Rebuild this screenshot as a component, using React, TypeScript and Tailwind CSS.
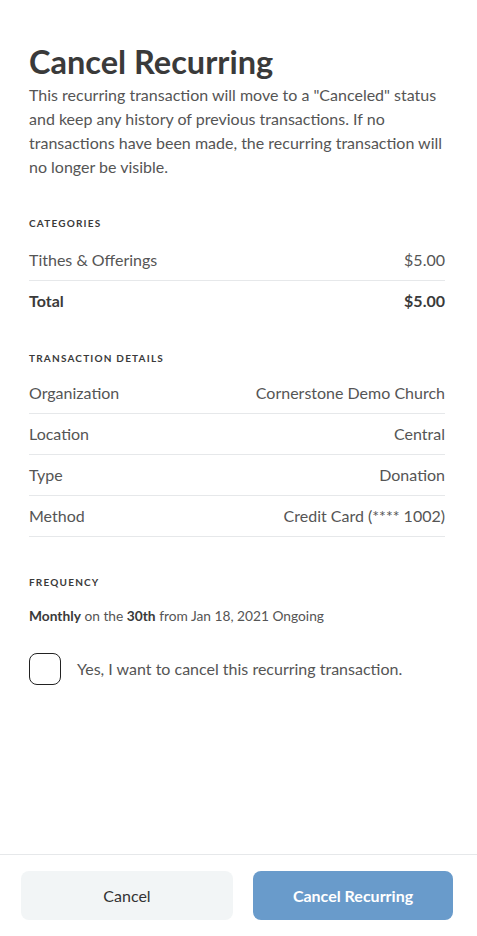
import React from "react";

const font = { fontFamily: '"Lato", "Liberation Sans", sans-serif' };

function Row({ label, value, bold, last }: { label: string; value: string; bold?: boolean; last?: boolean }) {
  return (
    <div
      className={`flex items-center justify-between py-[10px] text-base leading-5 ${
        last ? "" : "border-b border-[#e6e8ea]"
      } ${bold ? "font-bold text-[#3a3a3a]" : "text-[#555]"}`}
    >
      <span>{label}</span>
      <span>{value}</span>
    </div>
  );
}

function SectionLabel({ children }: { children: React.ReactNode }) {
  return (
    <p className="text-[10px] font-bold uppercase leading-4 tracking-[0.12em] text-[#3a3a3a]">
      {children}
    </p>
  );
}

export default function App() {
  return (
    <div className="flex h-[936px] w-full flex-col bg-white" style={font}>
      <div className="flex-1 pl-[29px] pr-[32px] pt-[44px]">
        <h1 className="text-[32.5px] font-bold leading-9 text-[#3a3a3a]">Cancel Recurring</h1>
        <p className="mt-[3px] text-base leading-6 text-[#555]">
          This recurring transaction will move to a "Canceled" status and keep any history of previous
          transactions. If no transactions have been made, the recurring transaction will no longer be
          visible.
        </p>

        {/* Categories */}
        <div className="mt-[36px]">
          <SectionLabel>Categories</SectionLabel>
          <div className="mt-[9px]">
            <Row label="Tithes & Offerings" value="$5.00" />
            <Row label="Total" value="$5.00" bold last />
          </div>
        </div>

        {/* Transaction details */}
        <div className="mt-[29px]">
          <SectionLabel>Transaction Details</SectionLabel>
          <div className="mt-[7px]">
            <Row label="Organization" value="Cornerstone Demo Church" />
            <Row label="Location" value="Central" />
            <Row label="Type" value="Donation" />
            <Row label="Method" value="Credit Card (**** 1002)" />
          </div>
        </div>

        {/* Frequency */}
        <div className="mt-[37px]">
          <SectionLabel>Frequency</SectionLabel>
          <p className="mt-[16px] text-[13.75px] leading-5 text-[#555]">
            <span className="font-bold text-[#3a3a3a]">Monthly</span> on the{" "}
            <span className="font-bold text-[#3a3a3a]">30th</span> from Jan 18, 2021 Ongoing
          </p>
        </div>

        <label className="mt-[27px] flex items-center gap-4">
          <span className="size-8 shrink-0 rounded-lg border border-[#222] bg-white" />
          <span className="text-base leading-5 text-[#555]">
            Yes, I want to cancel this recurring transaction.
          </span>
        </label>
      </div>

      <div className="flex gap-5 border-t border-[#e6e8ea] pb-4 pl-[21px] pt-4">
        <button
          type="button"
          className="h-[49px] w-[212px] rounded-lg bg-[#f2f5f6] text-base text-[#333]"
        >
          Cancel
        </button>
        <button
          type="button"
          className="h-[49px] w-[200px] rounded-lg bg-[#699bcb] text-base font-bold text-white"
        >
          Cancel Recurring
        </button>
      </div>
    </div>
  );
}
